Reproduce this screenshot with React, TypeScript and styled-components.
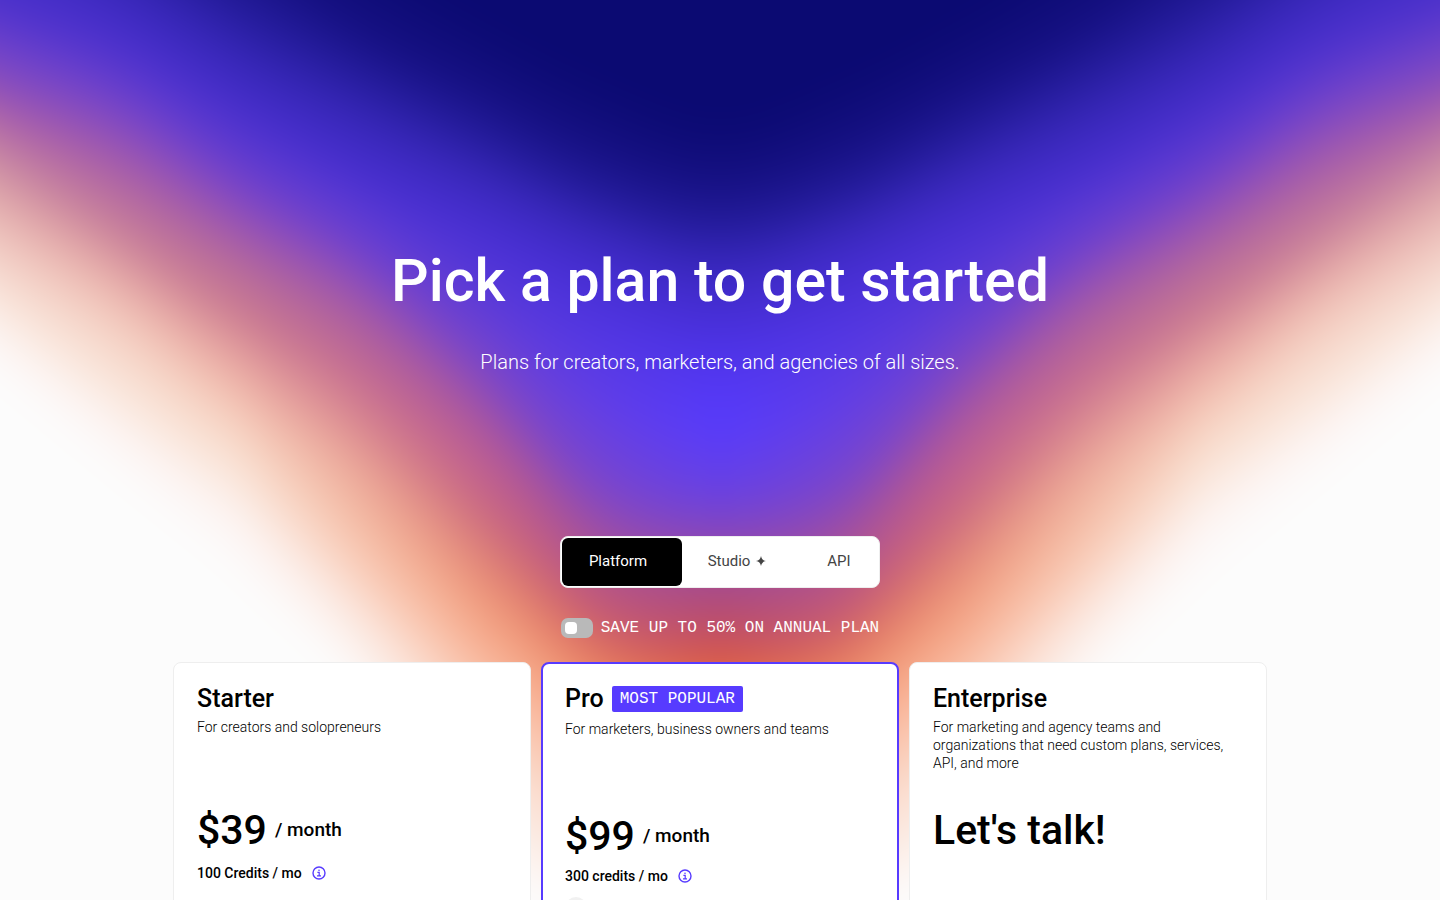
import React from "react";
import styled, { createGlobalStyle, css } from "styled-components";

const GlobalStyle = createGlobalStyle`
  *, *::before, *::after { box-sizing: border-box; }
  body {
    margin: 0;
    background: #fcfcfc;
    color: #000;
    font-family: Roboto, "Liberation Sans", sans-serif;
  }
  h1, h2, p { margin: 0; }
`;

const mono = css`
  font-family: "Liberation Mono", monospace;
  font-size: 16px;
  text-transform: uppercase;
`;

const Page = styled.main`
  position: relative;
  height: 100vh;
  overflow: hidden;
`;

const Glow = styled.svg`
  position: absolute;
  inset: 0;
  width: 100%;
  height: 900px;
  z-index: -1;
`;

const Hero = styled.header`
  padding: 241px 24px 0;
  text-align: center;
  color: #fff;
`;

const Title = styled.h1`
  font-size: 59px;
  font-weight: 500;
  line-height: 80px;
`;

const Subtitle = styled.p`
  margin-top: 27px;
  font-size: 20px;
  font-weight: 300;
  line-height: 28px;
`;

const Controls = styled.div`
  display: flex;
  flex-direction: column;
  align-items: center;
  gap: 30px;
  margin-top: 160px;
`;

const Tabs = styled.div`
  display: flex;
  width: 320px;
  height: 52px;
  padding: 1px;
  border: 1px solid #eee;
  border-radius: 8px;
  background: #fff;
`;

const Tab = styled.button<{ $active?: boolean; $basis: number }>`
  flex: 0 0 ${(p) => p.$basis}px;
  display: flex;
  align-items: center;
  justify-content: center;
  gap: 6px;
  padding: 0 8px 2px 0;
  border: 0;
  border-radius: 6px;
  background: ${(p) => (p.$active ? "#000" : "transparent")};
  color: ${(p) => (p.$active ? "#fff" : "#444")};
  font: 400 15px/20px Roboto, sans-serif;
  &:last-child { padding-right: 0; }
`;

const Billing = styled.label`
  ${mono}
  display: flex;
  align-items: center;
  gap: 8px;
  height: 20px;
  line-height: 20px;
  color: #fff;
`;

const Switch = styled.input`
  appearance: none;
  display: flex;
  width: 32px;
  height: 20px;
  margin: 0;
  padding: 4px;
  border-radius: 7px;
  background: #b9b9b9;
  &::before {
    content: "";
    width: 12px;
    height: 12px;
    border-radius: 4px;
    background: #fff;
  }
  &:checked { justify-content: flex-end; }
`;

const Plans = styled.section`
  display: grid;
  grid-template-columns: repeat(3, 1fr);
  gap: 10px;
  max-width: 1094px;
  margin: 24px auto 0;
`;

const Card = styled.article<{ $featured?: boolean }>`
  min-height: 480px;
  padding: ${(p) => (p.$featured ? "22px" : "23px")};
  border: ${(p) => (p.$featured ? "2px solid #573bff" : "1px solid #eee")};
  border-radius: 8px;
  background: #fff;
`;

const CardHead = styled.div<{ $featured?: boolean }>`
  min-height: ${(p) => (p.$featured ? "122px" : "116px")};
`;

const NameRow = styled.div<{ $featured?: boolean }>`
  display: flex;
  gap: 8px;
  height: ${(p) => (p.$featured ? "28px" : "26px")};
`;

const Name = styled.h2`
  font-size: 25px;
  font-weight: 500;
  line-height: 26px;
`;

const Badge = styled.span`
  ${mono}
  height: 26px;
  padding: 0 8px;
  border-radius: 2px;
  background: #573bff;
  color: #fff;
  line-height: 26px;
`;

const Blurb = styled.p`
  margin-top: 6px;
  font-size: 14px;
  font-weight: 300;
  line-height: 18px;
`;

const PriceRow = styled.p`
  display: flex;
  align-items: center;
  gap: 8px;
  font-size: 19px;
  font-weight: 500;
  line-height: 56px;
`;

const Price = styled.strong`
  font-size: 41px;
  font-weight: 500;
`;

const Credits = styled.p<{ $featured?: boolean }>`
  display: flex;
  align-items: center;
  gap: 10px;
  margin-top: ${(p) => (p.$featured ? "3px" : "6px")};
  font-size: 14px;
  font-weight: 500;
  line-height: 18px;
`;

const Avatar = styled.div`
  width: 22px;
  height: 22px;
  margin-top: 12px;
  border-radius: 50%;
  background: #f1f1f1;
`;

/* Each level: heights of its curve at x = 0, 120, ... 720, and its colour
   at x = 0, 240, 480 and 720. The right half mirrors the left. */
type Level = { y: number[]; color: string[] };

const levels: Level[] = [
  { y: [-260, -190, -110, -40, 30, 90, 130], color: ["#0b0a72", "#0b0a72", "#0b0a72", "#0b0a72"] },
  { y: [-190, -120, -50, 30, 90, 148, 180], color: ["#140f80", "#140f80", "#140f80", "#140f80"] },
  { y: [-140, -70, 10, 75, 136, 195, 225], color: ["#221a98", "#221a98", "#221a98", "#221a98"] },
  { y: [-70, 0, 75, 135, 188, 242, 275], color: ["#3a28bc", "#3a28bc", "#3a28bc", "#3a28c0"] },
  { y: [0, 45, 115, 180, 235, 290, 325], color: ["#4a30cc", "#482fcc", "#482fd2", "#482fd8"] },
  { y: [25, 75, 150, 210, 286, 345, 370], color: ["#5a38cc", "#5a38d0", "#5638d8", "#5035ee"] },
  { y: [45, 95, 172, 245, 335, 410, 435], color: ["#6a40cc", "#6a3ecc", "#6a40d2", "#573bfc"] },
  { y: [72, 118, 194, 265, 365, 464, 490], color: ["#7c48c4", "#7a44c8", "#7c46c6", "#6540e6"] },
  { y: [100, 154, 232, 292, 386, 500, 524], color: ["#9854b4", "#9c55b0", "#8a4abb", "#7a44cc"] },
  { y: [128, 195, 272, 335, 424, 548, 575], color: ["#b268a6", "#b66a9a", "#a855a0", "#a04a98"] },
  { y: [165, 241, 321, 385, 473, 596, 618], color: ["#c888a2", "#cc7c90", "#c06090", "#b64c70"] },
  { y: [205, 281, 370, 432, 518, 628, 648], color: ["#e0a8aa", "#e8a6a0", "#cc6c80", "#cc5258"] },
  { y: [250, 321, 410, 473, 562, 653, 673], color: ["#f0c8c0", "#f4c4b4", "#e08478", "#dd5c40"] },
  { y: [285, 366, 455, 527, 605, 700, 725], color: ["#f6dcd2", "#f8dccc", "#f09a7c", "#f08860"] },
  { y: [310, 402, 490, 576, 661, 750, 780], color: ["#fae8de", "#fae8de", "#f8b498", "#fbb090"] },
  { y: [345, 437, 530, 625, 740, 830, 850], color: ["#fcf4f2", "#fcf4f2", "#fad8c8", "#fad8c8"] },
  { y: [385, 490, 590, 700, 880, 930, 950], color: ["#fcfcfc", "#fcfcfc", "#fcfcfc", "#fcfcfc"] },
];

const SUBSTEPS = 4;
const mix = (a: number, b: number, t: number) => a + (b - a) * t;

function mixHex(a: string, b: string, t: number) {
  const channel = (s: string, i: number) => parseInt(s.slice(i, i + 2), 16);
  const parts = [1, 3, 5].map((i) => Math.round(mix(channel(a, i), channel(b, i), t)));
  return `rgb(${parts.join(",")})`;
}

function curvePath(y: number[]) {
  const left = y.map((v, i) => [i * 120, v]);
  left.unshift([-120, 2 * y[0] - y[1]]);
  const right = left.slice(0, -1).reverse().map(([x, v]) => [1440 - x, v]);
  const all = [...left, ...right];
  const last = all.length - 1;
  let d = `M-120 -600L-120 ${all[0][1]}`;
  for (let i = 0; i < last; i++) {
    const a = all[Math.max(i - 1, 0)];
    const b = all[i];
    const c = all[i + 1];
    const e = all[Math.min(i + 2, last)];
    d += `C${b[0] + (c[0] - a[0]) / 6} ${b[1] + (c[1] - a[1]) / 6} ${c[0] - (e[0] - b[0]) / 6} ${c[1] - (e[1] - b[1]) / 6} ${c[0]} ${c[1]}`;
  }
  return `${d}L1560 -600Z`;
}

const bands: { d: string; color: string[] }[] = [];
for (let i = levels.length - 1; i > 0; i--) {
  for (let s = 0; s < SUBSTEPS; s++) {
    const t = s / SUBSTEPS;
    bands.push({
      d: curvePath(levels[i].y.map((v, k) => mix(v, levels[i - 1].y[k], t))),
      color: levels[i].color.map((c, k) => mixHex(c, levels[i - 1].color[k], t)),
    });
  }
}
bands.push({ d: curvePath(levels[0].y), color: levels[0].color });

function Backdrop() {
  return (
    <Glow viewBox="0 0 1440 900" preserveAspectRatio="none" aria-hidden="true">
      <defs>
        <filter id="soften" filterUnits="userSpaceOnUse" x="-120" y="-100" width="1680" height="1100" colorInterpolationFilters="sRGB">
          <feGaussianBlur stdDeviation="18" />
        </filter>
        {bands.map((band, i) => (
          <linearGradient key={i} id={`band${i}`} gradientUnits="userSpaceOnUse" x1="0" x2="1440" y1="0" y2="0">
            {[...band.color, ...band.color.slice(0, -1).reverse()].map((c, k) => (
              <stop key={k} offset={k / 6} stopColor={c} />
            ))}
          </linearGradient>
        ))}
      </defs>
      <g filter="url(#soften)">
        <rect x="-120" y="-100" width="1680" height="1100" fill="#fcfcfc" />
        {bands.map((band, i) => (
          <path key={i} d={band.d} fill={`url(#band${i})`} />
        ))}
      </g>
    </Glow>
  );
}

function InfoIcon() {
  return (
    <svg width="14" height="14" viewBox="0 0 14 14" fill="none" stroke="#573bff" aria-hidden="true">
      <circle cx="7" cy="7" r="6" strokeWidth="1.4" />
      <path d="M5.4 6.4H7.2V9.7M5 9.8H9" strokeWidth="1.2" />
      <circle cx="7" cy="4.2" r="0.8" fill="#573bff" stroke="none" />
    </svg>
  );
}

function Sparkle() {
  return (
    <svg width="10" height="10" viewBox="0 0 10 10" fill="#444" aria-hidden="true">
      <path d="M5 0C5.6 3 7 4.4 10 5C7 5.6 5.6 7 5 10C4.4 7 3 5.6 0 5C3 4.4 4.4 3 5 0Z" />
    </svg>
  );
}

const plans = [
  { name: "Starter", blurb: "For creators and solopreneurs", price: "$39", credits: "100 Credits / mo" },
  { name: "Pro", blurb: "For marketers, business owners and teams", price: "$99", credits: "300 credits / mo", featured: true },
  { name: "Enterprise", blurb: "For marketing and agency teams and organizations that need custom plans, services, API, and more", price: "Let's talk!" },
];

export default function App() {
  return (
    <Page>
      <GlobalStyle />
      <Backdrop />
      <Hero>
        <Title>Pick a plan to get started</Title>
        <Subtitle>Plans for creators, marketers, and agencies of all sizes.</Subtitle>
      </Hero>
      <Controls>
        <Tabs role="tablist">
          <Tab role="tab" aria-selected="true" $active $basis={120}>Platform</Tab>
          <Tab role="tab" aria-selected="false" $basis={118}>Studio <Sparkle /></Tab>
          <Tab role="tab" aria-selected="false" $basis={78}>API</Tab>
        </Tabs>
        <Billing>
          <Switch type="checkbox" />
          Save up to 50% on annual plan
        </Billing>
      </Controls>
      <Plans>
        {plans.map((plan) => (
          <Card key={plan.name} $featured={plan.featured}>
            <CardHead $featured={plan.featured}>
              <NameRow $featured={plan.featured}>
                <Name>{plan.name}</Name>
                {plan.featured && <Badge>Most popular</Badge>}
              </NameRow>
              <Blurb>{plan.blurb}</Blurb>
            </CardHead>
            <PriceRow>
              <Price>{plan.price}</Price>
              {plan.credits && <span>/ month</span>}
            </PriceRow>
            {plan.credits && <Credits $featured={plan.featured}>{plan.credits}<InfoIcon /></Credits>}
            {plan.featured && <Avatar />}
          </Card>
        ))}
      </Plans>
    </Page>
  );
}
